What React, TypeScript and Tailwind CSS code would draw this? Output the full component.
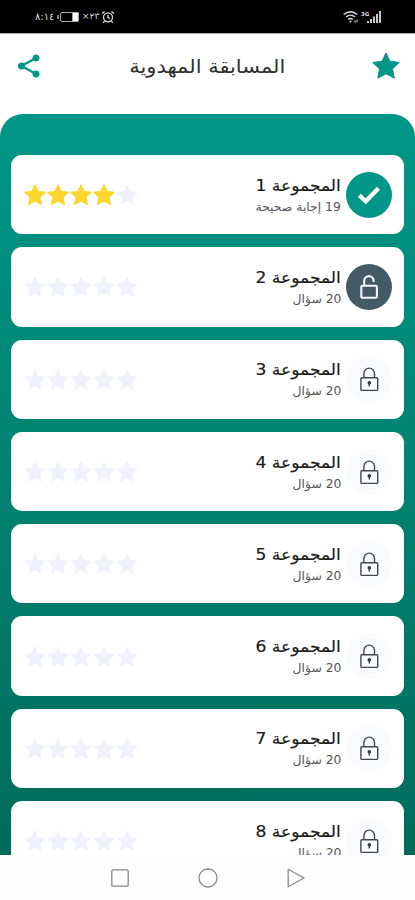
import React from "react";

const STAR =
  "M12 1.6l3.2 6.6 7.4 1-5.4 5.1 1.4 7.4L12 18.2l-6.6 3.5 1.4-7.4-5.4-5.1 7.4-1z";

function Star({ className }: { className: string }) {
  return (
    <svg viewBox="0 0 24 24" className={className} fill="currentColor" stroke="currentColor" strokeWidth="0.8" strokeLinejoin="round">
      <path d={STAR} />
    </svg>
  );
}

function Badge({ id }: { id: number }) {
  if (id === 1)
    return (
      <div className="flex h-[46px] w-[46px] shrink-0 items-center justify-center rounded-full bg-[#009688]">
        <svg viewBox="0 0 24 20" className="h-5 w-6" fill="none" stroke="white" strokeWidth="4.3">
          <path d="M2.3 10.3L8.8 16.3L21.5 3.3" />
        </svg>
      </div>
    );
  if (id === 2)
    return (
      <div className="flex h-[46px] w-[46px] shrink-0 items-center justify-center rounded-full bg-[#455a67]">
        <svg viewBox="0 0 20 26" className="h-[26px] w-5" fill="none" stroke="#f1f5f8" strokeWidth="2.1">
          <rect x="2.3" y="11.8" width="15.6" height="12" rx="1" />
          <path d="M5.2 11.5V6.8a4.7 4.7 0 0 1 9.4 0V8" />
        </svg>
      </div>
    );
  return (
    <div className="flex h-[46px] w-[46px] shrink-0 items-center justify-center rounded-full bg-[#fafbfe]">
      <svg viewBox="0 0 20 26" className="h-[26px] w-5" fill="none" stroke="#44474a" strokeWidth="1.4">
        <rect x="1.9" y="11.8" width="16.8" height="12.6" rx="1" />
        <path d="M4.9 11.7V7.4a5.3 5.3 0 0 1 10.6 0v4.3" />
        <circle cx="10.3" cy="16.9" r="1.8" fill="#333" stroke="none" />
        <path d="M10.3 16.7v3.8" />
      </svg>
    </div>
  );
}

function Card({ id }: { id: number }) {
  return (
    <div className="flex h-[79.3px] shrink-0 items-center rounded-[11px] bg-white pl-3 pr-3">
      <Badge id={id} />
      <div className="mr-[5px] flex flex-col items-start whitespace-nowrap pt-px">
        <div className="h-[23px] origin-right scale-x-[1.07] text-[16px] leading-[23px] text-[#1c1c1c] [-webkit-text-stroke:0.2px_#1c1c1c]">
          المجموعة {id}
        </div>
        <div className="h-5 origin-right scale-x-[1.03] text-[12px] leading-5 text-[#555]">
          {id === 1 ? "19 إجابة صحيحة" : "20 سؤال"}
        </div>
      </div>
      <div dir="ltr" className="mr-auto flex pt-px">
        {[0, 1, 2, 3, 4].map((n) => (
          <Star
            key={n}
            className={
              id === 1 && n < 4
                ? "-mr-[0.9px] h-6 w-6 text-[#fdd62b]"
                : "-mr-[0.9px] h-6 w-6 px-[0.5px] text-[#eff2fb]"
            }
          />
        ))}
      </div>
    </div>
  );
}

export default function App() {
  return (
    <div
      dir="rtl"
      className="flex h-[900px] w-[415px] flex-col overflow-hidden bg-white font-['DejaVu_Sans',sans-serif]"
    >
      <div dir="ltr" className="flex h-[33px] shrink-0 items-center justify-between bg-black pl-[35px] pr-[34px] text-[#ddd]">
        <div className="flex items-center leading-none">
          <span className="w-[20px] whitespace-nowrap text-[10px]">٨:١٤</span>
          <svg viewBox="0 0 23 12" className="ml-0.5 h-3 w-[23px]" fill="none" stroke="#aaa">
            <path d="M1 4v4" strokeWidth="1.5" />
            <rect x="3.5" y="1.5" width="18" height="9" rx="1.5" />
            <rect x="15.5" y="1.5" width="6" height="9" rx="1" fill="#fff" />
          </svg>
          <span className="ml-[2px] w-[18px] whitespace-nowrap text-[9px]">×٢٣</span>
          <svg viewBox="0 0 14 14" className="ml-px h-[14px] w-[14px]" fill="none" stroke="#ddd" strokeWidth="1.3">
            <circle cx="7" cy="7.3" r="4.5" />
            <path d="M7 4.8v2.7l2 1M1 3.5L3.6 1.4M13 3.5L10.4 1.4M3.5 11.2L2.2 12.8M10.5 11.2l1.3 1.6" />
          </svg>
        </div>
        <svg viewBox="0 0 38 14" className="h-[14px] w-[38px]" fill="none" stroke="#ddd" strokeWidth="1.4">
          <path d="M.7 4.5Q7.5-1 14.3 4.5M3 7q4.5-3.7 9 0M5.2 9.4q2.3-1.8 4.6 0" />
          <circle cx="7.5" cy="11.4" r="1" fill="#ddd" stroke="none" />
          <path d="M12 10.2v2.6M14 9.7v2.6" strokeWidth="1" />
          <text x="18" y="5.5" fontSize="5.5" fontWeight="700" fill="#ddd" stroke="none">3G</text>
          <path d="M25 13v-2M28 13V9M31 13V6.5M34 13V4M37 13V1" strokeWidth="1.8" />
        </svg>
      </div>

      <div className="flex h-[80.5px] shrink-0 items-center justify-between border-t border-[#aaa] px-[14px] pb-[15px]">
        <Star className="h-[30px] w-[30px] text-[#009688]" />
        <h1 className="ml-1 origin-right scale-x-[1.105] whitespace-nowrap pr-0 text-[19px] leading-7 text-[#303030] -mr-[14px]">
          المسابقة المهدوية
        </h1>
        <svg viewBox="0 0 24 26" className="ml-[3px] h-[26px] w-6" fill="#009688" stroke="#009688">
          <path d="M19 5L4.5 13L19 21" fill="none" strokeWidth="2.2" />
          <circle cx="19" cy="5" r="3.1" />
          <circle cx="4.5" cy="13" r="3.1" />
          <circle cx="19" cy="21" r="3.1" />
        </svg>
      </div>

      <div className="flex min-h-0 flex-1 flex-col gap-[13px] overflow-hidden rounded-t-[23px] bg-linear-to-b from-[#009788] to-[#006c5b] px-[11px] pt-[41.5px]">
        {[1, 2, 3, 4, 5, 6, 7, 8].map((id) => (
          <Card key={id} id={id} />
        ))}
      </div>

      <div dir="ltr" className="flex h-[45px] shrink-0 items-center justify-center gap-[68px] bg-[#fdfdfd]">
        <svg viewBox="0 0 20 20" className="h-5 w-5" fill="none" stroke="#888" strokeWidth="1.3">
          <rect x="1.8" y="1.8" width="16.4" height="16.4" rx="1" />
        </svg>
        <svg viewBox="0 0 20 20" className="h-5 w-5" fill="none" stroke="#888" strokeWidth="1.3">
          <circle cx="10" cy="10" r="9" />
        </svg>
        <svg viewBox="0 0 20 20" className="h-5 w-5" fill="none" stroke="#888" strokeWidth="1.3" strokeLinejoin="round">
          <path d="M2.2 1.2V18.8L18 10z" />
        </svg>
      </div>
    </div>
  );
}
